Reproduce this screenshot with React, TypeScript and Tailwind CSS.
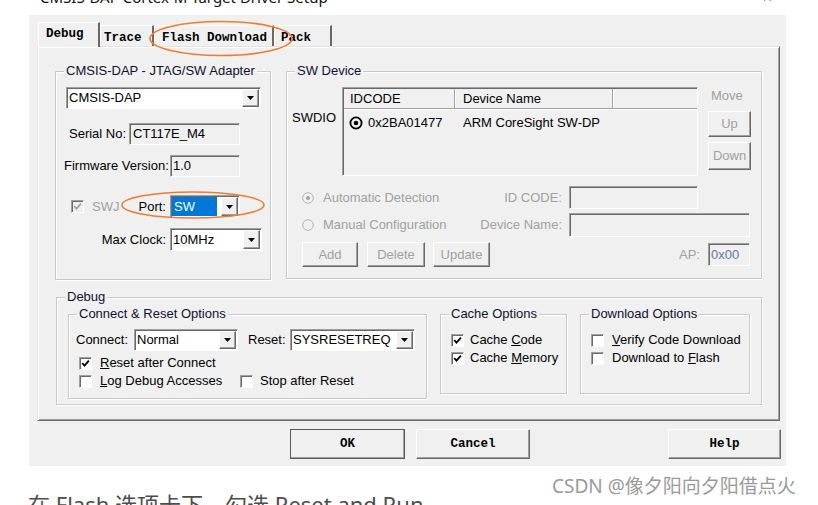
import React from "react";

const raised =
  "border border-t-white border-l-white border-r-[#696969] border-b-[#696969] shadow-[inset_-1px_-1px_0_#a0a0a0]";
const sunken =
  "border border-t-[#a0a0a0] border-l-[#a0a0a0] border-r-white border-b-white shadow-[inset_1px_1px_0_#696969]";
const groupBox =
  "relative border border-[#c9c9c9] shadow-[1px_1px_0_#fff,inset_1px_1px_0_#fff]";

function Legend({ children }: { children: React.ReactNode }) {
  return (
    <span className="absolute -top-[9px] left-[8px] bg-[#f0f0f0] px-[2px] leading-[16px] text-[13px] text-[#10102e]">
      {children}
    </span>
  );
}

function Arrow() {
  return (
    <svg width="7" height="4" viewBox="0 0 7 4">
      <polygon points="0,0 7,0 3.5,4" fill="#000" />
    </svg>
  );
}

function Combo({
  className,
  children,
}: {
  className: string;
  children: React.ReactNode;
}) {
  return (
    <div className={`flex bg-white ${sunken} ${className}`}>
      <div className="flex-1 flex items-center pl-[2px] overflow-hidden whitespace-nowrap">
        {children}
      </div>
      <div
        className={`w-[17px] my-[1px] mr-[1px] bg-[#f0f0f0] flex items-center justify-center ${raised}`}
      >
        <Arrow />
      </div>
    </div>
  );
}

function Check({ checked, disabled }: { checked?: boolean; disabled?: boolean }) {
  return (
    <span
      className={`w-[13px] h-[13px] shrink-0 flex items-center justify-center ${
        disabled ? "bg-[#f0f0f0]" : "bg-white"
      } ${sunken}`}
    >
      {checked && (
        <svg width="9" height="9" viewBox="0 0 9 9">
          <path
            d="M1.2 4.2 L3.5 6.6 L7.9 1.6"
            fill="none"
            stroke={disabled ? "#a0a0a0" : "#000"}
            strokeWidth="1.8"
          />
        </svg>
      )}
    </span>
  );
}

function Radio({ on }: { on?: boolean }) {
  return (
    <svg width="12" height="12" viewBox="0 0 12 12" className="shrink-0">
      <circle cx="6" cy="6" r="5.3" fill="#f0f0f0" stroke="#b4b4b4" strokeWidth="1" />
      {on && <circle cx="6" cy="6" r="2" fill="#a0a0a0" />}
    </svg>
  );
}

function Btn({
  className,
  children,
  disabled,
}: {
  className: string;
  children: React.ReactNode;
  disabled?: boolean;
}) {
  return (
    <div
      className={`flex items-center justify-center bg-[#f0f0f0] ${raised} ${
        disabled ? "text-[#a0a0a0]" : "text-black"
      } ${className}`}
    >
      {children}
    </div>
  );
}

function Tab({
  className,
  children,
  selected,
}: {
  className: string;
  children: React.ReactNode;
  selected?: boolean;
}) {
  return (
    <div
      className={`bg-[#f0f0f0] border-t border-l border-t-white border-l-white border-r-2 border-r-[#696969] flex items-start pt-[4px] font-['Liberation_Mono',monospace] font-bold text-[12.5px] leading-[15px] text-black ${
        selected ? "relative z-10 -mb-px h-[25px]" : "h-[21px]"
      } ${className}`}
    >
      {children}
    </div>
  );
}

export default function App() {
  return (
    <div className="relative w-[818px] h-[505px] overflow-hidden bg-white font-['Liberation_Sans',Arial,sans-serif] text-[13px] text-black">
      {/* cut-off title line */}
      <div className="h-[15px] overflow-hidden flex">
        <div className="ml-[40px] -mt-[12px] text-[15px] leading-[18px] font-['Noto_Sans',sans-serif] text-[#111]">
          CMSIS-DAP Cortex-M Target Driver Setup
        </div>
        <div className="ml-auto mr-[46px] -mt-[12px] text-[16px] leading-[18px] font-['Noto_Sans',sans-serif]">
          ×
        </div>
      </div>

      {/* dialog */}
      <div className="ml-[29px] w-[757px] h-[451px] bg-[#f0f0f0] pt-[6px]">
        {/* tabs */}
        <div className="flex items-end h-[25px] ml-[9px]">
          <Tab selected className="w-[62px] pl-[7px]">
            Debug
          </Tab>
          <Tab className="w-[54px] pl-[3px] pt-[5px]">Trace</Tab>
          <Tab className="w-[120px] pl-[7px] pt-[5px]">Flash Download</Tab>
          <Tab className="w-[58px] pl-[6px] pt-[5px]">Pack</Tab>
        </div>

        {/* tab panel */}
        <div className="ml-[8px] w-[743px] h-[375px] border border-t-[#e3e3e3] border-l-[#e3e3e3] border-r-[#696969] border-b-[#696969] shadow-[inset_1px_1px_0_#fff,inset_-1px_-1px_0_#a0a0a0] pl-[17px] pt-[24px]">
          <div className="flex items-start">
            {/* CMSIS-DAP group */}
            <div className={`${groupBox} w-[216px] h-[209px] flex flex-col pt-[15px]`}>
              <Legend>CMSIS-DAP - JTAG/SW Adapter</Legend>
              <Combo className="ml-[10px] w-[195px] h-[22px]">CMSIS-DAP</Combo>
              <div className="mt-[14px] flex items-center h-[22px]">
                <span className="ml-[13px] w-[60px]">Serial No:</span>
                <div className={`w-[111px] h-[22px] flex items-center pl-[3px] bg-[#f0f0f0] ${sunken}`}>
                  CT117E_M4
                </div>
              </div>
              <div className="mt-[10px] flex items-center h-[22px]">
                <span className="ml-[8px] w-[106px]">Firmware Version:</span>
                <div className={`w-[70px] h-[22px] flex items-center pl-[2px] bg-[#f0f0f0] ${sunken}`}>
                  1.0
                </div>
              </div>
              <div className="mt-[18px] flex items-center h-[23px]">
                <div className="w-[114px] flex items-center">
                  <span className="ml-[15px]">
                    <Check checked disabled />
                  </span>
                  <span className="ml-[8px] text-[#a0a0a0]">SWJ</span>
                  <span className="flex-1 text-right pr-[4px]">Port:</span>
                </div>
                <div className={`w-[70px] h-[23px] flex bg-white ${sunken}`}>
                  <div className="flex-1 flex items-center pl-[1px] py-[1px]">
                    <span className="w-[45px] h-full bg-[#0078d7] text-white flex items-center pl-[2px]">
                      SW
                    </span>
                  </div>
                  <div
                    className={`w-[17px] my-[1px] mr-[1px] bg-[#f0f0f0] flex items-center justify-center ${raised}`}
                  >
                    <Arrow />
                  </div>
                </div>
              </div>
              <div className="mt-[10px] flex items-center h-[23px]">
                <span className="w-[114px] text-right pr-[4px]">Max Clock:</span>
                <Combo className="w-[92px] h-[23px]">10MHz</Combo>
              </div>
            </div>

            {/* SW Device group */}
            <div className={`${groupBox} ml-[15px] w-[476px] h-[208px] flex flex-col pt-[15px]`}>
              <Legend>SW Device</Legend>
              <div className="flex items-start">
                <span className="ml-[5px] w-[50px] mt-[23px] leading-[15px]">SWDIO</span>
                <div className={`w-[356px] h-[89px] bg-[#f0f0f0] ${sunken} pl-[1px] pt-[1px]`}>
                  <div className="flex h-[20px] border-b border-[#a0a0a0] shadow-[0_1px_0_#fff]">
                    <div className="w-[111px] border-r border-[#a0a0a0] shadow-[1px_0_0_#fff] pl-[6px] flex items-center">
                      IDCODE
                    </div>
                    <div className="ml-px w-[157px] border-r border-[#a0a0a0] shadow-[1px_0_0_#fff] pl-[7px] flex items-center">
                      Device Name
                    </div>
                    <div className="flex-1" />
                  </div>
                  <div className="mt-[6px] flex items-center h-[16px]">
                    <svg width="14" height="14" viewBox="0 0 14 14" className="ml-[5px] shrink-0">
                      <circle cx="7" cy="7" r="5.6" fill="none" stroke="#000" strokeWidth="1.8" />
                      <circle cx="7" cy="7" r="2.3" fill="#000" />
                    </svg>
                    <span className="ml-[5px] w-[95px]">0x2BA01477</span>
                    <span>ARM CoreSight SW-DP</span>
                  </div>
                </div>
                <div className="ml-[10px] w-[43px] flex flex-col">
                  <span className="ml-[3px] text-[#a0a0a0] leading-[15px] mt-[1px]">Move</span>
                  <Btn disabled className="mt-[8px] h-[26px] w-[43px]">
                    Up
                  </Btn>
                  <Btn disabled className="mt-[5px] h-[28px] w-[43px]">
                    Down
                  </Btn>
                </div>
              </div>

              <div className="mt-[10px] flex items-center h-[23px] text-[#a0a0a0]">
                <div className="ml-[15px] w-[170px] flex items-center">
                  <Radio on />
                  <span className="ml-[9px]">Automatic Detection</span>
                </div>
                <span className="w-[90px] text-right">ID CODE:</span>
                <div className={`ml-[7px] w-[129px] h-[23px] bg-[#f0f0f0] ${sunken}`} />
              </div>
              <div className="mt-[4px] flex items-center h-[24px] text-[#a0a0a0]">
                <div className="ml-[15px] w-[170px] flex items-center">
                  <Radio />
                  <span className="ml-[9px]">Manual Configuration</span>
                </div>
                <span className="w-[90px] text-right">Device Name:</span>
                <div className={`ml-[7px] w-[181px] h-[24px] bg-[#f0f0f0] ${sunken}`} />
              </div>
              <div className="mt-[5px] flex items-center h-[25px]">
                <Btn disabled className="ml-[15px] w-[56px] h-[25px]">
                  Add
                </Btn>
                <Btn disabled className="ml-[9px] w-[58px] h-[25px]">
                  Delete
                </Btn>
                <Btn disabled className="ml-[8px] w-[57px] h-[25px]">
                  Update
                </Btn>
                <span className="flex-1" />
                <span className="text-[#a0a0a0]">AP:</span>
                <div
                  className={`ml-[8px] mr-[11px] w-[42px] h-[23px] bg-[#f0f0f0] flex items-center pl-[2px] text-[#66789a] ${sunken}`}
                >
                  0x00
                </div>
              </div>
            </div>
          </div>

          {/* Debug group */}
          <div className={`${groupBox} mt-[17px] ml-[1px] w-[706px] h-[108px] flex items-start pt-[16px]`}>
            <Legend>Debug</Legend>
            <div className={`${groupBox} ml-[11px] w-[359px] h-[85px] flex flex-col pt-[14px]`}>
              <Legend>Connect &amp; Reset Options</Legend>
              <div className="flex items-center h-[22px]">
                <span className="ml-[7px] w-[58px]">Connect:</span>
                <Combo className="w-[104px] h-[22px]">Normal</Combo>
                <span className="ml-[10px] w-[42px]">Reset:</span>
                <Combo className="w-[125px] h-[22px]">SYSRESETREQ</Combo>
              </div>
              <div className="mt-[5px] flex items-center h-[14px]">
                <span className="ml-[10px]">
                  <Check checked />
                </span>
                <span className="ml-[8px]">
                  <u>R</u>eset after Connect
                </span>
              </div>
              <div className="mt-[4px] flex items-center h-[14px]">
                <div className="w-[171px] flex items-center">
                  <span className="ml-[10px]">
                    <Check />
                  </span>
                  <span className="ml-[8px]">
                    <u>L</u>og Debug Accesses
                  </span>
                </div>
                <Check />
                <span className="ml-[7px]">Stop after Reset</span>
              </div>
            </div>

            <div className={`${groupBox} ml-[13px] w-[127px] h-[80px] flex flex-col pt-[18px]`}>
              <Legend>Cache Options</Legend>
              <div className="flex items-center h-[14px]">
                <span className="ml-[10px]">
                  <Check checked />
                </span>
                <span className="ml-[6px]">
                  Cache <u>C</u>ode
                </span>
              </div>
              <div className="mt-[4px] flex items-center h-[14px]">
                <span className="ml-[10px]">
                  <Check checked />
                </span>
                <span className="ml-[6px]">
                  Cache <u>M</u>emory
                </span>
              </div>
            </div>

            <div className={`${groupBox} ml-[13px] w-[170px] h-[80px] flex flex-col pt-[18px]`}>
              <Legend>Download Options</Legend>
              <div className="flex items-center h-[14px]">
                <span className="ml-[10px]">
                  <Check />
                </span>
                <span className="ml-[8px]">
                  <u>V</u>erify Code Download
                </span>
              </div>
              <div className="mt-[4px] flex items-center h-[14px]">
                <span className="ml-[10px]">
                  <Check />
                </span>
                <span className="ml-[8px]">
                  Download to <u>F</u>lash
                </span>
              </div>
            </div>
          </div>
        </div>

        {/* dialog buttons */}
        <div className="mt-[8px] flex font-['Liberation_Mono',monospace] font-bold text-[12.5px]">
          <Btn className="ml-[261px] w-[115px] h-[30px] outline outline-1 outline-[#5a5a5a] -outline-offset-1">
            OK
          </Btn>
          <Btn className="ml-[11px] w-[114px] h-[30px]">Cancel</Btn>
          <Btn className="ml-[138px] w-[113px] h-[30px]">Help</Btn>
        </div>
      </div>

      {/* text below the screenshot */}
      <div className="mt-[23px] ml-[28px] text-[22px] leading-[30px] text-[#4d4d4d] font-['Noto_Sans','Noto_Sans_CJK_SC',sans-serif] whitespace-nowrap">
        在 Flash 选项卡下，勾选 Reset and Run
      </div>

      {/* watermark */}
      <div className="absolute left-[552px] top-[474px] text-[19px] leading-[24px] text-[#9a9a9a] font-['Noto_Sans','Noto_Sans_CJK_SC',sans-serif] whitespace-nowrap">
        CSDN @像夕阳向夕阳借点火
      </div>

      {/* orange annotation ellipses */}
      <svg className="absolute left-0 top-0 pointer-events-none" width="818" height="505">
        <ellipse cx="221" cy="38.5" rx="71" ry="17" fill="none" stroke="#ed7d31" strokeWidth="1.6" />
        <ellipse cx="193" cy="205" rx="71" ry="13" fill="none" stroke="#ed7d31" strokeWidth="1.6" />
      </svg>
    </div>
  );
}
